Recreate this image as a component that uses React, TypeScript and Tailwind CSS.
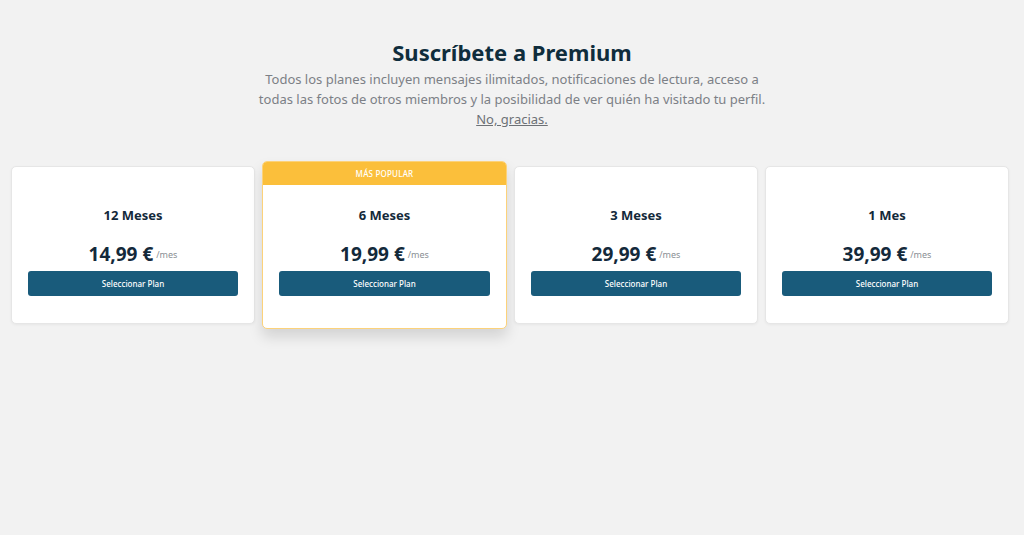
import React from "react";

type Plan = { name: string; price: string; popular?: boolean };

const plans: Plan[] = [
  { name: "12 Meses", price: "14,99 €" },
  { name: "6 Meses", price: "19,99 €", popular: true },
  { name: "3 Meses", price: "29,99 €" },
  { name: "1 Mes", price: "39,99 €" },
];

function PlanCard({ plan }: { plan: Plan }) {
  return (
    <div
      className={
        plan.popular
          ? "w-[245px] rounded-[5px] border border-[#fcd27a] bg-white overflow-hidden shadow-[0_8px_14px_rgba(0,0,0,0.13)]"
          : "w-[244px] rounded-[5px] border border-[#e6e6e6] bg-white shadow-[0_1px_3px_rgba(0,0,0,0.05)]"
      }
    >
      {plan.popular && (
        <div className="h-[23px] bg-[#fbbf3b] flex items-center justify-center text-[8px] font-medium uppercase text-white tracking-wide">
          Más popular
        </div>
      )}
      <div className={plan.popular ? "pt-[22px] pb-[32px] px-[16px]" : "pt-[40px] pb-[27px] px-[16px]"}>
        <p className="text-center text-[13px] leading-4 font-bold text-[#13293a]">{plan.name}</p>
        <div className="mt-[19px] h-6 flex items-end justify-center">
          <span className="text-[19px] leading-6 font-bold text-[#13293a]">{plan.price}</span>
          <span className="ml-[3px] mb-[5px] text-[9px] leading-3 text-[#8a8f94]">/mes</span>
        </div>
        <button className="mt-[5px] w-full h-[25px] rounded-[3px] bg-[#195b7b] text-white text-[8px] font-medium flex items-center justify-center">
          Seleccionar Plan
        </button>
      </div>
    </div>
  );
}

export default function App() {
  return (
    <div className="min-h-[535px] w-full bg-[#f2f2f2] font-['Noto_Sans','Open_Sans',sans-serif]">
      <div className="pt-[36px] flex flex-col items-center">
        <h1 className="text-[22px] leading-8 font-bold text-[#0f2d3c]">Suscríbete a Premium</h1>
        <p className="mt-[1px] w-[520px] text-center text-[13px] leading-[20px] text-[#7c8086]">
          Todos los planes incluyen mensajes ilimitados, notificaciones de lectura, acceso a todas las fotos de otros
          miembros y la posibilidad de ver quién ha visitado tu perfil.
          <br />
          <a href="#" className="underline text-[#6d7176]">No, gracias.</a>
        </p>
      </div>
      <div className="mt-[32px] pl-[11px] flex items-center gap-[7px]">
        {plans.map((p) => (
          <PlanCard key={p.name} plan={p} />
        ))}
      </div>
    </div>
  );
}
